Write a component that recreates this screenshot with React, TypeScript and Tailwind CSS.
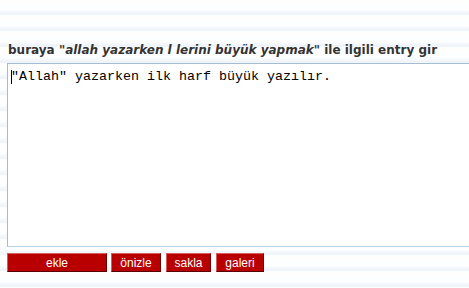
import React from 'react';

const buttons = [
  { label: 'ekle', width: 'w-[100px]', gap: '' },
  { label: 'önizle', width: 'w-[50px]', gap: 'ml-[4px]' },
  { label: 'sakla', width: 'w-[45px]', gap: 'ml-[5px]' },
  { label: 'galeri', width: 'w-[48px]', gap: 'ml-[5px]' },
];

const App: React.FC = () => {
  return (
    <div className="w-[469px] h-[288px] overflow-hidden bg-white bg-[repeating-linear-gradient(to_bottom,#ffffff_0px,#fdfeff_9px,#f5f8fc_12px,#ebf1f8_14px,#f9fbfd_15px,#ffffff_16px)]">
      <div className="pl-[7px] pt-[42px]">
        {/* Label */}
        <div className="font-['DejaVu_Sans',Verdana,sans-serif] text-[12px] font-bold text-[#333333] leading-[16px] pl-[1px]">
          buraya <i className="font-bold">"allah yazarken l lerini büyük yapmak"</i> ile ilgili entry gir
        </div>

        {/* Entry box */}
        <div className="mt-[5px] w-[480px] h-[184px] bg-white border border-[#a3bcd3] border-b-[#b4d2e2] pl-[3px] pt-[5px]">
          <div className="relative font-['Liberation_Mono','Courier_New',monospace] text-[13.33px] leading-[16px] text-black whitespace-pre">
            <span className="absolute left-0 top-[1px] w-px h-[14px] bg-black" />
            "Allah" yazarken ilk harf büyük yazılır.
          </div>
        </div>

        {/* Buttons */}
        <div className="flex mt-[6px]">
          {buttons.map(b => (
            <button
              key={b.label}
              className={`${b.width} ${b.gap} h-[19px] flex items-center justify-center bg-[#b80000] border border-t-[#d85a5a] border-l-[#d85a5a] border-r-[#6a0000] border-b-[#5a0000] text-white font-['Liberation_Sans',Arial,sans-serif] text-[12px] leading-none`}
            >
              {b.label}
            </button>
          ))}
        </div>
      </div>
    </div>
  );
};

export default App;
